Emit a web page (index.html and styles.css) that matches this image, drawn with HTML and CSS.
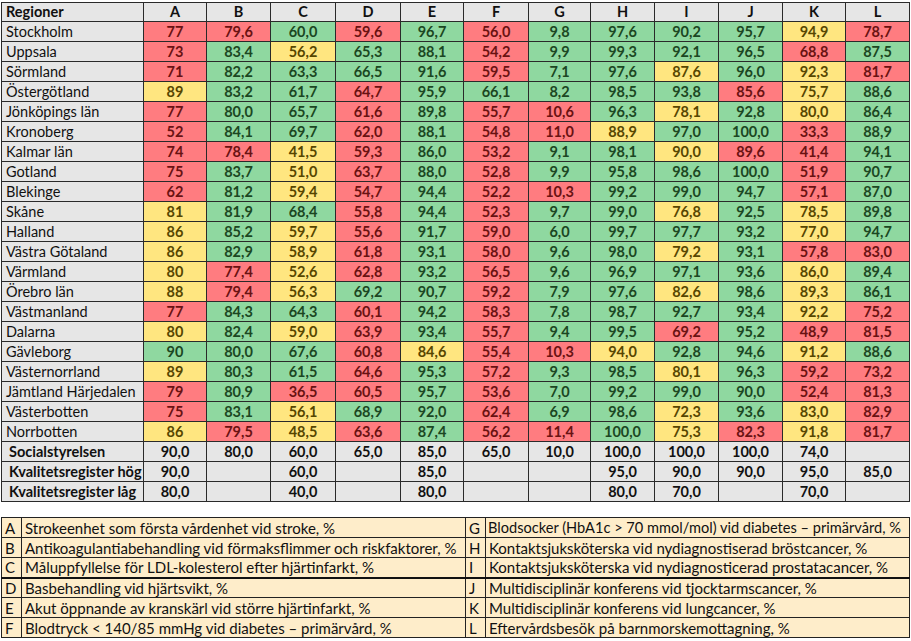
FILE: index.html
```html
<!DOCTYPE html>
<html lang="sv">
<head>
<meta charset="utf-8">
<title>Regioner</title>
<link rel="stylesheet" href="styles.css">
</head>
<body>
<div class="page">
<table class="grid">
<colgroup>
<col class="c-label"><col style="width:63px"><col style="width:64px"><col style="width:65px"><col style="width:65px"><col style="width:63px"><col style="width:65px"><col style="width:62px"><col style="width:64px"><col style="width:64px"><col style="width:64px"><col style="width:63px"><col style="width:64px">
</colgroup>
<thead>
<tr><th class="lbl">Regioner</th><th>A</th><th>B</th><th>C</th><th>D</th><th>E</th><th>F</th><th>G</th><th>H</th><th>I</th><th>J</th><th>K</th><th>L</th></tr>
</thead>
<tbody id="body"></tbody>
</table>

<table class="legend">
<colgroup><col class="lk"><col class="lt1"><col class="lk"><col class="lt2"></colgroup>
<tr><td>A</td><td>Strokeenhet som första vårdenhet vid stroke, %</td><td>G</td><td class="tight">Blodsocker (HbA1c &gt; 70 mmol/mol) vid diabetes – primärvård, %</td></tr>
<tr><td>B</td><td>Antikoagulantiabehandling vid förmaksflimmer och riskfaktorer, %</td><td>H</td><td>Kontaktsjuksköterska vid nydiagnostiserad bröstcancer, %</td></tr>
<tr class="sep"><td>C</td><td>Måluppfyllelse för LDL-kolesterol efter hjärtinfarkt, %</td><td>I</td><td>Kontaktsjuksköterska vid nydiagnosticerad prostatacancer, %</td></tr>
<tr><td>D</td><td>Basbehandling vid hjärtsvikt, %</td><td>J</td><td>Multidisciplinär konferens vid tjocktarmscancer, %</td></tr>
<tr><td>E</td><td>Akut öppnande av kranskärl vid större hjärtinfarkt, %</td><td>K</td><td>Multidisciplinär konferens vid lungcancer, %</td></tr>
<tr><td>F</td><td>Blodtryck &lt; 140/85 mmHg vid diabetes – primärvård, %</td><td>L</td><td>Eftervårdsbesök på barnmorskemottagning, %</td></tr>
</table>
</div>
<script src="app.js"></script>
</body>
</html>
```

FILE: styles.css
```css
* { box-sizing: border-box; }
html, body { margin: 0; padding: 0; background: #fff; }
body { font-family: Lato, "Open Sans", "Liberation Sans", sans-serif; color: #111; }
.page { padding: 2px 0 0 1px; width: 911px; }

.grid {
  border-collapse: collapse;
  table-layout: fixed;
  width: 908px;
  font-size: 14.5px;
}
.grid .c-label { width: 142px; }
.grid th, .grid td {
  border: 1px solid #2a2a2a;
  height: 20px;
  padding: 0;
  text-align: center;
  font-weight: 700;
  white-space: nowrap;
  line-height: 18px;
  background: #e6e6e6;
}
.grid th { height: 19px; }
.grid th.lbl, .grid td.lbl { text-align: left; padding-left: 4px; }
.grid td.lbl { font-weight: 400; }
.grid td.ref { padding-left: 7px; font-weight: 700; }
.grid td.r { background: #ff7c80; color: #6a1212; }
.grid td.g { background: #8fd8a0; color: #1b4722; }
.grid td.y { background: #ffe680; color: #574600; }
.grid td.n { color: #111; }

.legend {
  margin-top: 15px;
  border-collapse: collapse;
  table-layout: fixed;
  width: 908px;
  font-size: 15px;
  background: #feedca;
}
.legend .lk { width: 20px; }
.legend .lt1 { width: 444px; }
.legend .lt2 { width: 424px; }
.legend td {
  border: 1px solid #222;
  height: 20px;
  padding: 0 0 0 3px;
  line-height: 18px;
  white-space: nowrap;
  overflow: hidden;
}
.legend td.tight { font-size: 14.6px; padding-left: 2px; }
.legend tr.sep td { border-bottom: 2px solid #111; }
```

FILE: app.js
```js
var rows = [
["Stockholm","77r","79,6r","60,0g","59,6r","96,7g","56,0r","9,8g","97,6g","90,2g","95,7g","94,9y","78,7r"],
["Uppsala","73r","83,4g","56,2y","65,3g","88,1g","54,2r","9,9g","99,3g","92,1g","96,5g","68,8r","87,5g"],
["Sörmland","71r","82,2g","63,3g","66,5g","91,6g","59,5r","7,1g","97,6g","87,6y","96,0g","92,3y","81,7r"],
["Östergötland","89y","83,2g","61,7g","64,7r","95,9g","66,1g","8,2g","98,5g","93,8g","85,6r","75,7y","88,6g"],
["Jönköpings län","77r","80,0g","65,7g","61,6r","89,8g","55,7r","10,6r","96,3g","78,1y","92,8g","80,0y","86,4g"],
["Kronoberg","52r","84,1g","69,7g","62,0r","88,1g","54,8r","11,0r","88,9y","97,0g","100,0g","33,3r","88,9g"],
["Kalmar län","74r","78,4r","41,5y","59,3r","86,0g","53,2r","9,1g","98,1g","90,0y","89,6r","41,4r","94,1g"],
["Gotland","75r","83,7g","51,0y","63,7r","88,0g","52,8r","9,9g","95,8g","98,6g","100,0g","51,9r","90,7g"],
["Blekinge","62r","81,2g","59,4y","54,7r","94,4g","52,2r","10,3r","99,2g","99,0g","94,7g","57,1r","87,0g"],
["Skåne","81y","81,9g","68,4g","55,8r","94,4g","52,3r","9,7g","99,0g","76,8y","92,5g","78,5y","89,8g"],
["Halland","86y","85,2g","59,7y","55,6r","91,7g","59,0r","6,0g","99,7g","97,7g","93,2g","77,0y","94,7g"],
["Västra Götaland","86y","82,9g","58,9y","61,8r","93,1g","58,0r","9,6g","98,0g","79,2y","93,1g","57,8r","83,0r"],
["Värmland","80y","77,4r","52,6y","62,8r","93,2g","56,5r","9,6g","96,9g","97,1g","93,6g","86,0y","89,4g"],
["Örebro län","88y","79,4r","56,3y","69,2g","90,7g","59,2r","7,9g","97,6g","82,6y","98,6g","89,3y","86,1g"],
["Västmanland","77r","84,3g","64,3g","60,1r","94,2g","58,3r","7,8g","98,7g","92,7g","93,4g","92,2y","75,2r"],
["Dalarna","80y","82,4g","59,0y","63,9r","93,4g","55,7r","9,4g","99,5g","69,2r","95,2g","48,9r","81,5r"],
["Gävleborg","90g","80,0g","67,6g","60,8r","84,6y","55,4r","10,3r","94,0y","92,8g","94,6g","91,2y","88,6g"],
["Västernorrland","89y","80,3g","61,5g","64,6r","95,3g","57,2r","9,3g","98,5g","80,1y","96,3g","59,2r","73,2r"],
["Jämtland Härjedalen","79r","80,9g","36,5r","60,5r","95,7g","53,6r","7,0g","99,2g","99,0g","90,0g","52,4r","81,3r"],
["Västerbotten","75r","83,1g","56,1y","68,9g","92,0g","62,4r","6,9g","98,6g","72,3y","93,6g","83,0y","82,9r"],
["Norrbotten","86y","79,5r","48,5y","63,6r","87,4g","56,2r","11,4r","100,0g","75,3y","82,3r","91,8y","81,7r"]
];
var refs = [
["Socialstyrelsen","90,0","80,0","60,0","65,0","85,0","65,0","10,0","100,0","100,0","100,0","74,0",""],
["Kvalitetsregister hög","90,0","","60,0","","85,0","","","95,0","90,0","90,0","95,0","85,0"],
["Kvalitetsregister låg","80,0","","40,0","","80,0","","","80,0","70,0","","70,0",""]
];
var body = document.getElementById("body");
rows.forEach(function (r) {
  var tr = document.createElement("tr");
  var td = document.createElement("td");
  td.className = "lbl"; td.textContent = r[0]; tr.appendChild(td);
  for (var i = 1; i < r.length; i++) {
    var c = document.createElement("td");
    var v = r[i];
    c.className = v.slice(-1);
    c.textContent = v.slice(0, -1);
    tr.appendChild(c);
  }
  body.appendChild(tr);
});
refs.forEach(function (r) {
  var tr = document.createElement("tr");
  var td = document.createElement("td");
  td.className = "lbl ref"; td.textContent = r[0]; tr.appendChild(td);
  for (var i = 1; i < r.length; i++) {
    var c = document.createElement("td");
    c.className = "n";
    c.textContent = r[i];
    tr.appendChild(c);
  }
  body.appendChild(tr);
});
```
